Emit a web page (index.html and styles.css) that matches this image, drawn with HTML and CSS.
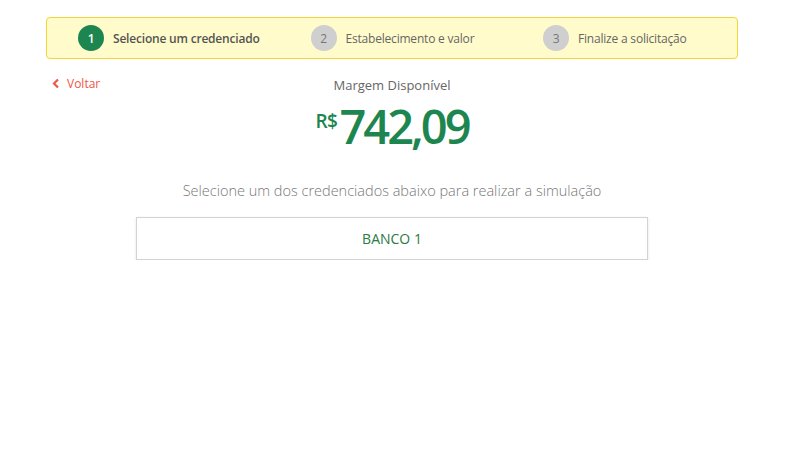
FILE: index.html
```html
<!DOCTYPE html>
<html lang="pt-BR">
<head>
  <meta charset="UTF-8">
  <title>Margem Disponível</title>
  <link rel="stylesheet" href="styles.css">
</head>
<body>
  <div class="page">
    <div class="steps">
      <div class="step active"><span class="num">1</span>Selecione um credenciado</div>
      <div class="step"><span class="num">2</span>Estabelecimento e valor</div>
      <div class="step"><span class="num">3</span>Finalize a solicitação</div>
    </div>

    <div class="top">
      <a class="back" href="#">
        <svg width="8" height="11" viewBox="0 0 8 11"><path d="M6 1.5 L2 5.5 L6 9.5" fill="none" stroke="currentColor" stroke-width="2.2"/></svg>
        Voltar
      </a>
      <div class="margin">
        <p class="label">Margem Disponível</p>
        <p class="value"><span class="cur">R$</span>742,09</p>
      </div>
    </div>

    <p class="hint">Selecione um dos credenciados abaixo para realizar a simulação</p>

    <div class="bank">BANCO 1</div>
  </div>
</body>
</html>
```

FILE: styles.css
```css
:root {
  --green: #1d8650;
  --text: #555;
  --red: #f05545;
}

body {
  margin: 0;
  font-family: "Open Sans", sans-serif;
  color: var(--text);
  background: #fff;
}

.page {
  width: 692px;
  margin-left: 46px;
  padding-top: 17px;
}

.steps {
  display: flex;
  align-items: center;
  height: 40px;
  background-color: #fffbcb;
  border: 1px solid #f3d33a;
  border-radius: 4px;
  padding-left: 31px;
}

.step {
  display: flex;
  align-items: center;
  flex: none;
  width: 232.5px;
  font-size: 12px;
  color: #666;
  letter-spacing: -0.2px;
}

.step .num {
  display: inline-flex;
  align-items: center;
  justify-content: center;
  width: 26px;
  height: 26px;
  border-radius: 50%;
  background-color: #cfcfcf;
  color: #777;
  font-size: 12px;
  margin-right: 9px;
}

.step.active {
  font-weight: 600;
  color: #555;
}

.step.active .num {
  background-color: var(--green);
  color: #fff;
}

.top {
  position: relative;
}

.back {
  position: absolute;
  left: 6px;
  top: 16px;
  display: flex;
  align-items: center;
  gap: 7px;
  color: var(--red);
  text-decoration: none;
  font-size: 12px;
}

.margin {
  text-align: center;
  padding-top: 17px;
}

.label {
  margin: 0;
  font-size: 13px;
  line-height: 18px;
  color: #666;
}

.value {
  margin: 0;
  font-size: 47px;
  font-weight: 600;
  color: var(--green);
  letter-spacing: -3px;
}

.cur {
  font-size: 19px;
  vertical-align: 16px;
  letter-spacing: -0.5px;
  margin-right: 2px;
}

.hint {
  text-align: center;
  font-size: 14.5px;
  line-height: 20px;
  font-weight: 300;
  color: #777;
  margin: 23px 0 16px;
}

.bank {
  width: 510px;
  margin: 0 auto;
  border: 1px solid #d3d3d3;
  box-shadow: 0 1px 3px rgba(0,0,0,0.1);
  height: 41px;
  line-height: 41px;
  text-align: center;
  font-size: 14px;
  color: #2c7a45;
}
```
